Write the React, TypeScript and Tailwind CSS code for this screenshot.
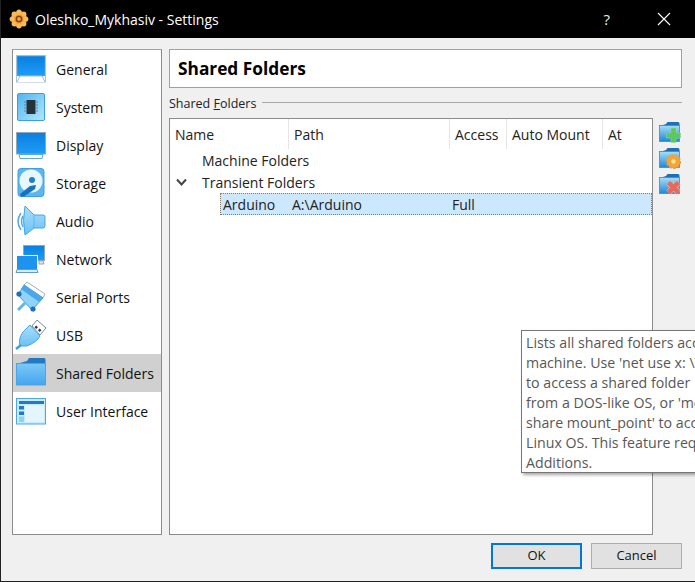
const font = "font-['Open_Sans','Liberation_Sans',sans-serif]";

const Defs = () => (
  <svg width="0" height="0" className="absolute">
    <defs>
      <linearGradient id="screen" x1="0" y1="0" x2="0" y2="1">
        <stop offset="0" stopColor="#0a7fe0" />
        <stop offset="1" stopColor="#1e9df5" />
      </linearGradient>
      <linearGradient id="pale" x1="0" y1="0" x2="1" y2="1">
        <stop offset="0" stopColor="#4fb6f2" />
        <stop offset="1" stopColor="#b4e6fc" />
      </linearGradient>
      <linearGradient id="light" x1="0" y1="0" x2="0" y2="1">
        <stop offset="0" stopColor="#a8e0fb" />
        <stop offset="1" stopColor="#6cc0f4" />
      </linearGradient>
      <linearGradient id="folder" x1="0" y1="0" x2="0" y2="1">
        <stop offset="0" stopColor="#7cc8f7" />
        <stop offset="1" stopColor="#45a5ee" />
      </linearGradient>
      <linearGradient id="tool" x1="0" y1="0" x2="0" y2="1">
        <stop offset="0" stopColor="#a6def9" />
        <stop offset="1" stopColor="#1f86d8" />
      </linearGradient>
    </defs>
  </svg>
);

const GeneralIcon = () => (
  <svg width="32" height="32" viewBox="0 0 32 32">
    <rect x="1.5" y="2.5" width="29" height="26.5" fill="#fff" stroke="#a9c4d6" />
    <rect x="2" y="3" width="28" height="20" fill="url(#screen)" stroke="#7fb6dc" strokeWidth="0.5" />
    <path d="M2 29 L5 23 H27 L30 29" fill="#fff" stroke="#a9b8c2" />
  </svg>
);

const SystemIcon = () => (
  <svg width="32" height="32" viewBox="0 0 32 32">
    <rect x="2.5" y="2.5" width="27" height="27" rx="1.5" fill="url(#pale)" stroke="#3b9ee0" />
    <rect x="11.5" y="9" width="9" height="14" rx="0.5" fill="#26323a" />
    <path d="M9 11h2M9 14h2M9 17h2M9 20h2M21 11h2M21 14h2M21 17h2M21 20h2" stroke="#5d7f94" strokeWidth="1" />
  </svg>
);

const DisplayIcon = () => (
  <svg width="32" height="32" viewBox="0 0 32 32">
    <rect x="1.5" y="3.5" width="29" height="21.5" fill="url(#screen)" stroke="#8fa9ba" />
    <path d="M4 25.5 H28 L27 29.5 H5 Z" fill="#fff" stroke="#5aa7dc" />
  </svg>
);

const StorageIcon = () => (
  <svg width="32" height="32" viewBox="0 0 32 32">
    <rect x="3" y="1.5" width="26" height="28" rx="3" fill="#5ab8ef" stroke="#3d9fdf" />
    <circle cx="16" cy="14" r="11.5" fill="#e8f6fd" />
    <circle cx="17" cy="13" r="3" fill="#1f7fce" />
    <path d="M5 27 L15 19 L21 18 L20 22 L9 29.5 H6 Z" fill="#1573c4" />
  </svg>
);

const AudioIcon = () => (
  <svg width="32" height="32" viewBox="0 0 32 32">
    <path d="M6 8 Q0 16 6 25" fill="none" stroke="#4ea9e6" strokeWidth="1.5" />
    <path d="M8 11 Q5 16 8 22" fill="none" stroke="#4ea9e6" strokeWidth="1.5" />
    <path d="M10 1 L19 10 H28 Q30 10 30 12 V21 Q30 23 28 23 H19 L10 30 Q7 15 10 1 Z" fill="url(#light)" stroke="#46a6e6" />
    <path d="M19 10 V23" stroke="#46a6e6" strokeWidth="0.6" />
  </svg>
);

const NetworkIcon = () => (
  <svg width="32" height="32" viewBox="0 0 32 32">
    <rect x="8.5" y="2.5" width="21" height="15" fill="url(#screen)" stroke="#8fa9ba" />
    <rect x="1.5" y="12.5" width="21" height="14" fill="#1d93ee" stroke="#fff" />
    <path d="M2 26.5 H22 L23 29.5 H1 Z" fill="#dfe8ee" stroke="#5f9cc6" />
    <path d="M24 18 H28 L29 21 H24 Z" fill="#dfe8ee" stroke="#8fa9ba" />
  </svg>
);

const SerialIcon = () => (
  <svg width="32" height="32" viewBox="0 0 32 32">
    <path d="M12 1 L30 13 L28 17 L9 4 Z" fill="#fff" stroke="#9fb0ba" />
    <path d="M9 4 L28 17 L17 29 L3 14 Z" fill="#8fd4f8" stroke="#3fa2e6" />
    <path d="M9 4 L28 17 L24 21 L6 8 Z" fill="#4aa8ea" />
    <circle cx="4" cy="13" r="2.6" fill="#1f6fb6" />
    <circle cx="18" cy="28" r="2.6" fill="#1f6fb6" />
    <path d="M3 29 L10 22" stroke="#5ab8ef" strokeWidth="3" />
  </svg>
);

const UsbIcon = () => (
  <svg width="32" height="32" viewBox="0 0 32 32">
    <path d="M22 1 L31 9 L25 16 L17 7 Z" fill="#fff" stroke="#7c8c96" />
    <rect x="20" y="7" width="2.5" height="2.5" fill="#2b3a44" transform="rotate(45 21.2 8.2)" />
    <rect x="23.5" y="10" width="2.5" height="2.5" fill="#2b3a44" transform="rotate(45 24.7 11.2)" />
    <path d="M15 6 L25 17 Q22 23 12 27 L5 27 Q3 20 8 13 Z" fill="url(#light)" stroke="#46a6e6" />
    <path d="M6 26 L1 30" stroke="#3a9ee4" strokeWidth="2.5" />
  </svg>
);

const FolderIcon = () => (
  <svg width="32" height="32" viewBox="0 0 32 32">
    <path d="M12 4 L14 1 H29 Q30.5 1 30.5 2.5 V7 H1.5 Z" fill="#2379c4" />
    <rect x="1.5" y="6.5" width="29" height="21.5" fill="url(#folder)" stroke="#4aa5e8" />
  </svg>
);

const UiIcon = () => (
  <svg width="32" height="32" viewBox="0 0 32 32">
    <rect x="1.5" y="3.5" width="29" height="25.5" fill="#c9ecfc" stroke="#4aa9e8" />
    <rect x="4" y="6" width="25" height="3" fill="#2379c4" />
    <rect x="4" y="11" width="5" height="3.5" fill="#2379c4" />
    <rect x="4" y="16.5" width="5" height="3.5" fill="#2379c4" />
    <rect x="10" y="10.5" width="19" height="16.5" fill="#e3f6fe" />
    <rect x="4" y="21.5" width="5" height="5.5" fill="#8ed2f6" />
  </svg>
);

const ToolFolder = ({ children }: { children: React.ReactNode }) => (
  <svg width="22" height="22" viewBox="0 0 22 22">
    <path d="M7 2 L8.5 0 H19 Q20.5 0 20.5 1.5 V4 H1 Z" fill="#1f6fb6" />
    <rect x="0.5" y="3.5" width="20" height="16" fill="url(#tool)" stroke="#2f8fd8" strokeWidth="0.8" />
    {children}
  </svg>
);

const items = [
  { label: "General", icon: <GeneralIcon /> },
  { label: "System", icon: <SystemIcon /> },
  { label: "Display", icon: <DisplayIcon /> },
  { label: "Storage", icon: <StorageIcon /> },
  { label: "Audio", icon: <AudioIcon /> },
  { label: "Network", icon: <NetworkIcon /> },
  { label: "Serial Ports", icon: <SerialIcon /> },
  { label: "USB", icon: <UsbIcon /> },
  { label: "Shared Folders", icon: <FolderIcon />, active: true },
  { label: "User Interface", icon: <UiIcon /> },
];

const columns = [
  { label: "Name", w: "w-[119px]" },
  { label: "Path", w: "w-[161px]" },
  { label: "Access", w: "w-[57px]" },
  { label: "Auto Mount", w: "w-[96px]" },
];

const tipLines = [
  "Lists all shared folders accessible to this",
  "machine. Use 'net use x: \\\\vboxsvr\\share'",
  "to access a shared folder",
  "from a DOS-like OS, or 'mount -t vboxsf",
  "share mount_point' to access it from a",
  "Linux OS. This feature requires Guest",
  "Additions.",
];

const Sidebar = () => (
  <div className="w-[150px] h-[486px] bg-white border border-[#8c8c8c] border-t-[#a0a0a0]">
    {items.map((item) => (
      <div
        key={item.label}
        className={`h-[38px] flex items-center pl-[2px] gap-[9px] ${item.active ? "bg-[#d0d0d0]" : ""}`}
      >
        {item.icon}
        <span className="text-[14px] text-[#111] whitespace-nowrap">{item.label}</span>
      </div>
    ))}
  </div>
);

const SharedTable = () => (
  <div className="w-[484px] h-[417px] bg-white border border-[#8c8c8c] text-[14px] text-[#222]">
    <div className="flex h-[30px]">
      {columns.map((col) => (
        <div key={col.label} className={`${col.w} pl-[5px] pt-[5px] border-r border-[#e5e5e5] whitespace-nowrap`}>
          {col.label}
        </div>
      ))}
      <div className="pl-[5px] pt-[5px]">At</div>
    </div>
    <div className="h-[22px] flex items-center pl-[32px]">Machine Folders</div>
    <div className="h-[22px] flex items-center">
      <svg width="32" height="22" viewBox="0 0 32 22" fill="none">
        <path d="M7 8.5 L11.5 13.5 L16 8.5" stroke="#444" strokeWidth="2" />
      </svg>
      Transient Folders
    </div>
    <div className="h-[22px] ml-[50px] flex items-center bg-[#cce8ff] border border-dotted border-[#8a7a66]">
      <span className="w-[71px] pl-[2px]">Arduino</span>
      <span className="w-[160px]">A:\Arduino</span>
      <span>Full</span>
    </div>
  </div>
);

const Toolbar = () => (
  <div className="flex flex-col gap-[4px] ml-[6px] pt-[4px]">
    <ToolFolder>
      <path d="M12 6h5v5h4.5v5H17v4.5h-5V16H7.5v-5H12z" fill="#5cc85c" stroke="#8ad88a" strokeWidth="0.6" />
    </ToolFolder>
    <ToolFolder>
      <circle cx="14.5" cy="13.5" r="6.6" fill="#f2a53a" />
      <circle cx="14.5" cy="13.5" r="6.8" fill="none" stroke="#eda032" strokeWidth="1.6" strokeDasharray="2.6 1.6" />
      <circle cx="14.5" cy="13.5" r="2.2" fill="#ffe08f" />
    </ToolFolder>
    <ToolFolder>
      <path d="M9.5 8.5 L19.5 18.5 M19.5 8.5 L9.5 18.5" stroke="#f0c0b0" strokeWidth="6" />
      <path d="M9.5 8.5 L19.5 18.5 M19.5 8.5 L9.5 18.5" stroke="#e8695a" strokeWidth="4.6" />
    </ToolFolder>
  </div>
);

export default function App() {
  return (
    <div className={`${font} relative w-[695px] h-[582px] overflow-hidden bg-[#f0f0f0] flex flex-col border-l border-b border-[#222]`}>
      <Defs />
      <div className="h-[38px] shrink-0 -ml-px bg-black flex items-center text-white text-[14px] pl-[9px]">
        <svg width="20" height="20" viewBox="0 0 20 20" className="mr-[6px]">
          <circle cx="10" cy="10" r="8" fill="#e8912c" />
          <g fill="#f9bb58">
            <circle cx="10" cy="3.2" r="2.6" />
            <circle cx="10" cy="16.8" r="2.6" />
            <circle cx="3.2" cy="10" r="2.6" />
            <circle cx="16.8" cy="10" r="2.6" />
            <circle cx="5.2" cy="5.2" r="2.6" />
            <circle cx="14.8" cy="5.2" r="2.6" />
            <circle cx="5.2" cy="14.8" r="2.6" />
            <circle cx="14.8" cy="14.8" r="2.6" />
          </g>
          <circle cx="10" cy="10" r="2.6" fill="#f0a53c" stroke="#7a3f10" strokeWidth="1.4" />
        </svg>
        <span className="whitespace-nowrap">Oleshko_Mykhasiv - Settings</span>
        <span className="ml-auto mr-[47px] text-[15px] text-[#eee]">?</span>
        <svg width="14" height="14" viewBox="0 0 14 14" className="mr-[24px]">
          <path d="M1 1 L13 13 M13 1 L1 13" stroke="#fff" strokeWidth="1.1" />
        </svg>
      </div>

      <div className="flex pl-[11px] pt-[11px] gap-[7px]">
        <Sidebar />
        <div className="w-[513px] flex flex-col">
          <div className="h-[39px] bg-white border border-[#a0a0a0] flex items-center pl-[8px] text-[17.3px] font-bold text-black">
            Shared Folders
          </div>
          <div className="h-[30px] flex items-center text-[12.5px] text-[#222] pt-[3px]">
            <span className="whitespace-nowrap">
              Shared <span className="underline">F</span>olders
            </span>
            <div className="flex-1 h-px bg-[#a8a8a8] ml-[6px] -mt-[4px]" />
          </div>
          <div className="flex">
            <SharedTable />
            <Toolbar />
          </div>
        </div>
      </div>

      <div className="flex justify-end gap-[9px] pr-[13px] pt-[8px] text-[13px] text-[#111]">
        <button className="w-[91px] h-[26px] bg-[#e1e1e1] border-2 border-[#0078d7]">OK</button>
        <button className="w-[91px] h-[26px] bg-[#e1e1e1] border border-[#adadad]">Cancel</button>
      </div>

      <div className="absolute left-[520px] top-[330px] w-[220px] h-[143px] bg-white border border-[#767676] shadow-[2px_2px_3px_rgba(0,0,0,0.35)] pl-[4px] pt-[2px] text-[14.2px] leading-[20px] text-[#575757]">
        {tipLines.map((line) => (
          <div key={line} className="whitespace-nowrap">{line}</div>
        ))}
      </div>
    </div>
  );
}
